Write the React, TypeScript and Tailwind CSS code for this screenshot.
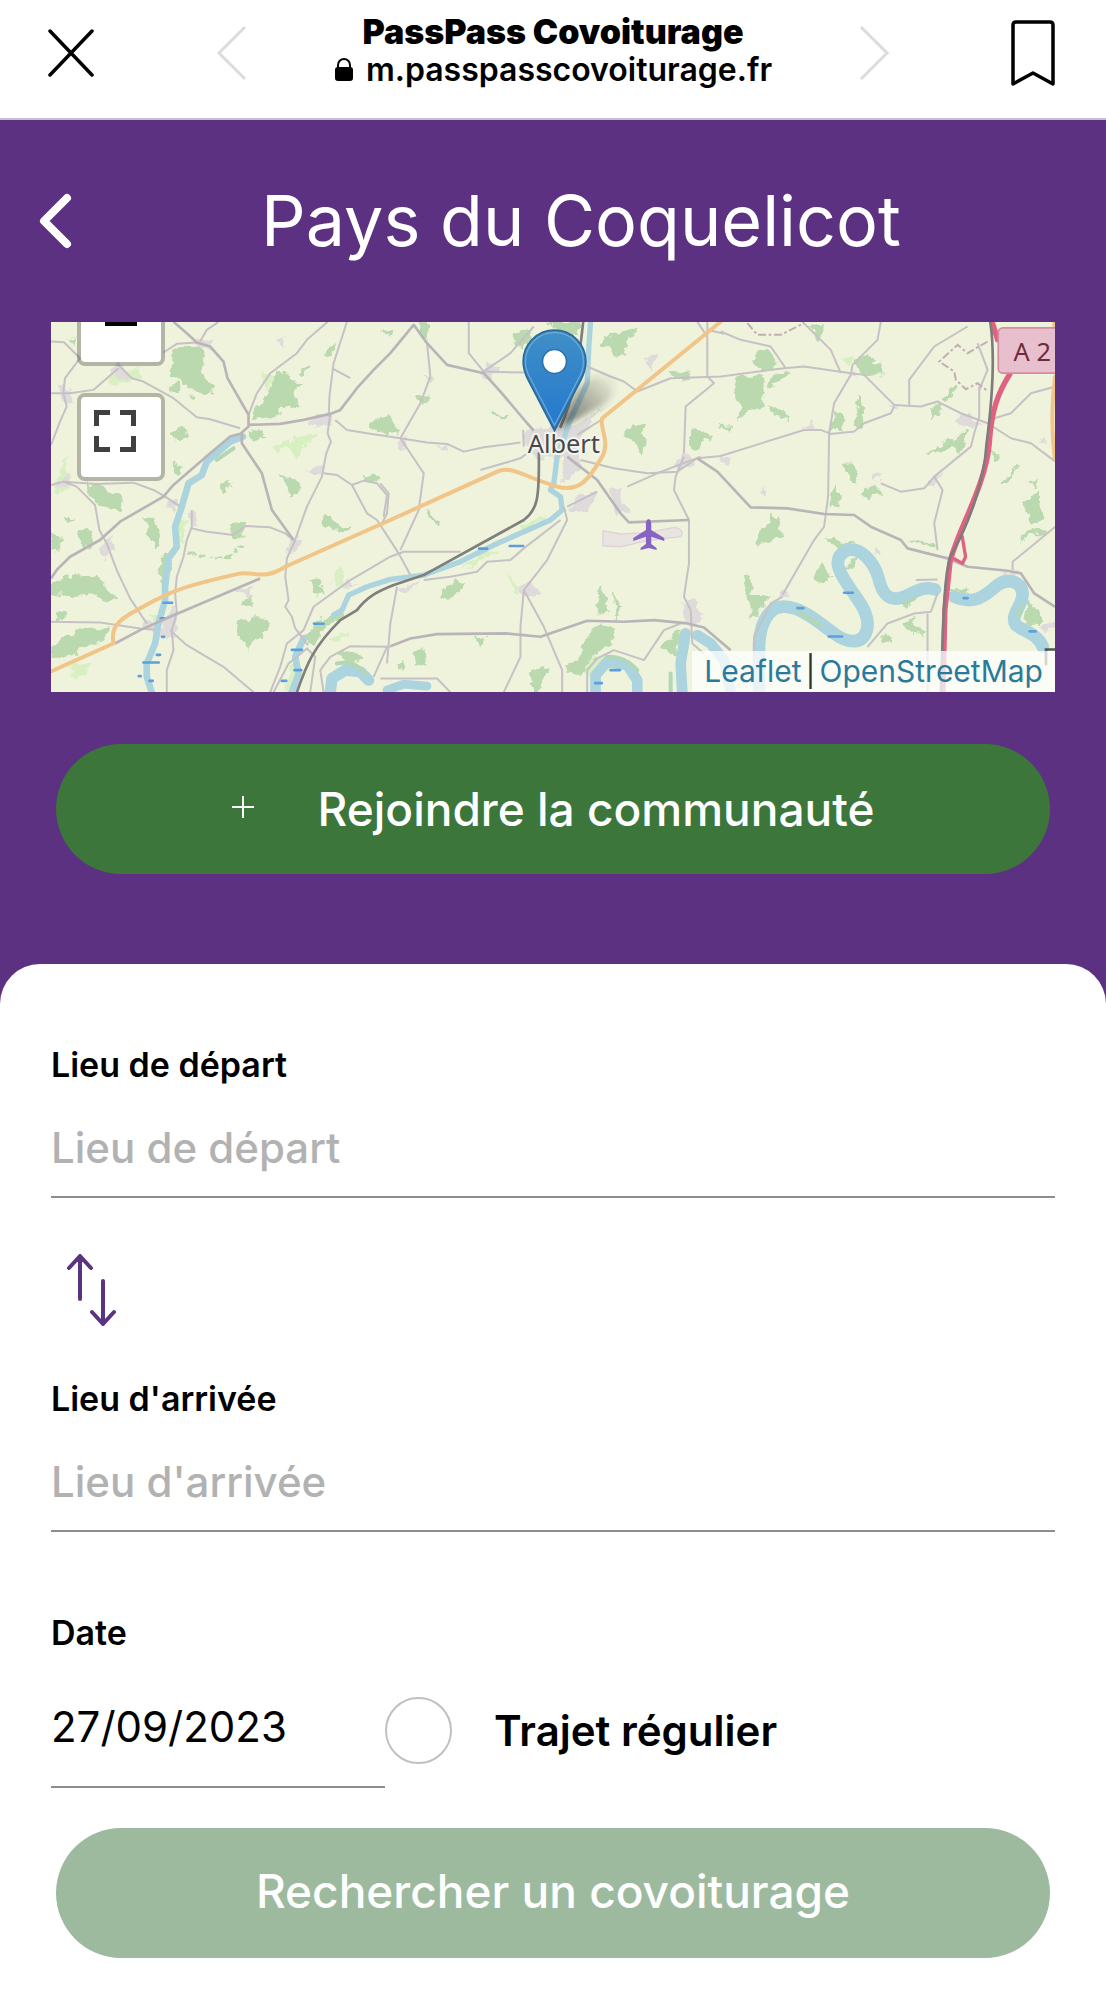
import React from "react";

const WEST_ROADS = [
  "M33 95L72 97L120 145L75 205L70 250L80 290L60 335L33 405",
  "M33 250H90L160 240L235 175",
  "M235 165L275 205L310 215L400 265L470 322L510 328L600 355",
  "M470 98L410 102L370 128M480 95L500 60L535 36",
  "M625 315L650 250L690 190L770 130L800 90L862 36",
  "M865 320L868 255L880 160L920 36M880 178L930 205",
  "M870 312L862 370L872 395L858 430L845 500L800 590L775 660L765 690L740 745L735 800L745 870L735 890L755 920L765 955L803 1005",
  "M885 330L920 360L980 370L1080 385L1160 398L1220 402L1270 425L1330 412L1440 398",
  "M33 525L70 515L110 530L165 585L178 660L200 700L230 780L270 865L320 940",
  "M70 515L170 522L280 518L340 540L375 560L420 590",
  "M455 600V650L440 690L430 740L410 800L405 850L410 910L395 960L400 1020L380 1080V1146",
  "M455 655L500 665L580 675L615 648L690 652L735 670L760 690",
  "M33 935L180 937L300 955L345 958M390 960L440 1005L550 1070L640 1146",
  "M850 490L890 495L935 525L980 610L1010 630L1075 730L1110 795",
  "M935 525L970 512L1010 520L1040 555L1030 620",
  "M1260 725H1090L1050 740L930 810L820 890L790 960L740 1000L720 1070L690 1146",
  "M700 1146L745 1060L800 1015L825 1040L810 1146M850 1146L840 1080L870 1040L930 1008L1050 1010",
  "M1000 1100L1040 1010",
];

const WEST_MAIN = [
  "M400 36L440 70L470 98L510 110L550 155L562 205L605 280L625 315V350L605 368V400L665 490L695 600L760 690",
  "M605 370L570 380L510 430L400 525L370 560L240 635L180 690L90 740L50 780L33 805",
  "M625 345L720 342L790 330L870 312L900 300L950 235L1000 180L1050 130L1120 45L1160 100L1220 165L1330 190L1380 245L1460 340L1480 362",
  "M225 1000L300 960L390 920L660 805",
  "M1050 1008L1110 985L1190 972L1400 970L1500 980L1640 932L1750 935L1840 930L1940 940L1990 952L2070 1020",
];

const MID_ROADS = [
  "M265 36V130L310 185L430 188M310 185L390 130L460 50",
  "M140 100L150 200L120 280L60 385L130 490L115 600L60 720M0 520L25 550L20 610L0 650",
  "M620 170L690 200L730 215L770 245L870 205L1020 200L1210 175L1270 170L1410 190",
  "M980 36V200L1000 220L915 290L910 430M950 36L980 80M980 60L1030 72",
  "M600 450L700 475L800 490L890 485L950 445L1020 438L1270 360L1320 360L1350 372L1420 365L1450 340L1530 310L1540 290",
  "M740 530L830 490L960 440",
  "M910 440L885 500L880 540L925 630V760L910 860L930 900L935 1000L970 1030",
  "M550 590L560 630L500 750L430 840L420 950V1040L370 1146",
  "M430 840L490 950L545 1080V1146",
  "M560 590L650 545M300 480L420 445L440 430M430 410L428 360M590 375L670 325",
  "M130 810L210 800L290 785L320 755L390 750L430 715L540 630",
  "M50 830L30 940L20 1060M0 1105H170L210 1146",
  "M640 1050L700 1020L790 1050L850 960L900 940M620 1146V1080L650 1045",
];

const EAST_ROADS = [
  "M0 65L60 90L150 110L195 175M245 36L330 120L360 190",
  "M480 36L470 90L395 165L390 195L340 280L325 370L322 560L310 650L280 690L185 855",
  "M390 190L430 195L520 285L600 290L650 275L720 310L800 340L870 385L930 400L1003 455",
  "M565 285V210L640 110L740 50M820 325L870 310L930 250L1003 230",
  "M775 230V320L760 370L750 410L640 500L665 540L640 640L650 720",
  "M640 500L610 535L540 545L480 520M770 100L800 180L775 240",
  "M875 780V755L1003 650M440 1010L500 940L580 910L630 905L650 850",
  "M620 910V1146M585 810L650 808M100 1050V980L150 880L185 860",
];

const WEST_WOODS = [
  "M410 112L480 110L490 150L480 185L520 230L510 255L440 230L420 212L395 200L392 150Z",
  "M705 185L750 190L745 215L782 220L760 250L775 290L720 285L710 320L640 328L640 300L665 285L690 230Z",
  "M140 515L175 530L205 545L245 565L240 598L180 585L145 550Z",
  "M300 620L340 625L360 680L350 712L335 690L330 645Z",
  "M36 820L90 800L170 795L190 830L215 850L230 865L180 870L170 850L70 858L36 850Z",
  "M36 1010L100 970L150 955L205 950L190 990L140 1010L90 1035L36 1035Z",
  "M590 935L650 920L690 945L660 980L640 985L625 1022L605 985L590 975Z",
  "M395 365L420 350L438 370L420 392L395 388Z",
  "M725 500L770 515L775 550L750 550Z",
  "M120 660L145 655L155 690L140 712L120 695Z",
  "M36 660L60 690L62 715L36 720Z",
  "M545 530L565 510L570 530L550 548Z",
  "M570 645L612 640L610 680L575 680Z",
  "M845 615L870 620L880 640L925 660L915 668L850 640Z",
  "M970 490L1010 495L1015 515L975 515Z",
  "M1000 330L1045 320L1040 365L985 358Z",
  "M620 365L660 360L680 378L640 390Z",
  "M780 185L810 165L812 178L785 192Z",
  "M850 135L880 108L878 130Z",
  "M810 810L830 805L850 855L820 850ZM600 865L635 860L635 885L605 885Z",
  "M790 985L830 940L900 905L910 920L860 950L815 1005Z",
  "M370 740L390 735L395 760L380 800L382 835L368 830L362 800Z",
  "M390 235L410 220L415 245ZM445 260L465 258L460 268ZM75 625L103 626L80 634Z",
  "M50 910L75 905L75 925L52 925ZM400 455L425 470L415 490L400 480Z",
  "M890 1030L930 1020L965 1050L920 1060ZM85 90L105 85L105 110Z",
];

const MID_WOODS = [
  "M505 36H600L590 75L540 70Z",
  "M660 100L700 75L765 55L740 90L735 135L700 135L690 110L665 110Z",
  "M405 80L440 60L445 90L425 118L405 105Z",
  "M110 36H145L140 85L125 80Z",
  "M0 320L30 325L55 370L30 360L20 375L0 355Z",
  "M730 375L760 345L795 350L780 370L790 390L785 440L768 405L765 385Z",
  "M935 350L995 380L960 400L950 420L928 410Z",
  "M180 850L220 815L248 825L240 840L205 870Z",
  "M640 890L660 830L680 880L685 910L650 908ZM698 850L720 890L710 925Z",
  "M550 1070L590 1050L620 980L660 945L710 960L690 1000L650 1015L600 1100Z",
  "M450 1080L480 1070L505 1080L480 1110L478 1146H460Z",
  "M865 190L925 180L930 210L905 222Z",
  "M50 1060L70 1055L75 1080L55 1082ZM100 1030L125 1015L130 1070L110 1068Z",
  "M280 985L315 985L305 1005ZM140 595L175 640L165 640Z",
  "M855 1000L895 960L890 1050L850 1010Z",
  "M110 260L145 262L125 280ZM10 60L35 62L30 78ZM340 312L385 320L345 320Z",
];

const EAST_WOODS = [
  "M50 200L125 200L130 290L75 300L60 330V270L40 250Z",
  "M110 130L150 125L165 165L125 180L105 160Z",
  "M145 235L160 195L205 180L195 205L165 220Z",
  "M400 150L440 135L480 160L480 195L430 195Z",
  "M270 45L300 40L312 75L290 85Z",
  "M340 310L365 310L365 358L330 358Z",
  "M400 350L415 255L432 320L430 350L410 362Z",
  "M370 460L395 460L412 515L395 515Z",
  "M330 560L345 525L360 590L328 582Z",
  "M430 535L470 535L485 555L455 555L450 568L430 560Z",
  "M632 290L660 280L655 310L635 322ZM672 275L705 225L712 232L680 280Z",
  "M615 435L660 405L700 395L735 365L730 410L715 425L705 408L660 420Z",
  "M115 660L145 645L150 620L175 625L170 655L190 680L150 685L112 710Z",
  "M70 800L85 790L95 855L150 860L130 885L95 925L85 890Z",
  "M280 780L310 765L330 800L315 820L285 810Z",
  "M545 945L575 920L580 945L612 970L570 965Z",
  "M910 580L950 550L955 590L970 630L930 635Z",
  "M895 690L930 660L970 660L965 678L930 672ZM560 700L645 700L640 710Z",
  "M918 870L955 910V945L915 945ZM690 835L740 840L735 855Z",
  "M375 790L395 745L420 740L390 775ZM545 880L575 865L570 890Z",
  "M840 520L860 505L885 470L862 520ZM310 680L350 695L400 700L370 715L330 705Z",
  "M140 295L185 310L200 325L165 315ZM930 515L950 510L948 530Z",
  "M815 420L830 445L815 448ZM0 350L30 348L20 360ZM480 985L515 975L510 992Z",
];

const WEST_TOWNS = [
  "M210 175L240 160L275 195L240 212Z",
  "M470 90L520 95L510 118L470 105Z",
  "M800 345L830 312L870 315L865 348Z",
  "M180 710L210 680L220 720L195 745Z",
  "M50 520L85 490L90 520L60 532Z",
  "M795 480L845 470L845 495Z",
  "M50 225L75 215L100 290L70 275Z",
  "M305 920L330 935L360 955L400 880L412 950L400 985L350 975L315 960Z",
  "M370 590L400 570L415 590L400 602ZM440 620L465 600L465 655Z",
  "M585 840L635 830L625 860ZM910 830L930 805L945 825Z",
  "M755 685L785 690L770 720L735 725ZM700 95L735 85L730 110Z",
];

const MID_TOWNS = [
  "M425 370L470 350H590L680 280L640 320L590 400L600 470L560 515H545V430L470 450L430 400Z",
  "M560 600L600 560L655 540L640 580L600 615Z",
  "M680 530L720 535L720 570L750 600L715 610Z",
  "M55 390L75 385L80 420L60 425ZM175 405L205 400L200 425Z",
  "M300 185L320 160L360 175L330 210ZM130 190L165 205L145 215Z",
  "M880 460L910 430L940 440L950 460L890 480Z",
  "M905 880L940 870L965 930L930 950L915 935Z",
  "M415 840L445 815L480 850L445 865Z",
  "M795 145L840 125L820 160L810 185ZM50 840L110 815L80 850Z",
];

const EAST_TOWNS = [
  "M0 435L35 440L20 460L0 455ZM245 350L275 335L280 360Z",
  "M705 320L740 310L780 340L750 360L715 345Z",
  "M455 500L485 482L470 520ZM610 530L640 490L665 490L635 540Z",
  "M500 285L540 280L530 305ZM110 545L135 535L125 560Z",
  "M170 860L195 835L205 865ZM830 795L900 785L870 810L835 815Z",
  "M960 950L1003 930V955L970 970ZM950 400L975 370L970 395Z",
  "M380 190L400 180L410 205ZM460 710L480 730L460 735Z",
];

const PALE_WOODS = [
  "M36 545L75 450L85 430L75 480L105 520L50 555Z",
  "M200 195L290 175L300 205L220 225Z",
  "M700 410L780 380L840 370L800 400L770 450L750 410L710 430Z",
  "M415 620L440 640L430 700L412 690Z",
  "M80 1070L150 1060L140 1090L110 1105Z",
  "M660 190L700 195L680 240Z",
  "M1260 780L1320 735L1380 715L1320 755Z",
  "M1440 650L1520 610L1510 635L1450 665Z",
  "M1400 780L1435 830L1432 855L1415 830Z",
  "M840 850L900 770L915 830L890 835L880 800Z",
  "M330 915L360 915L370 940L345 945Z",
  "M860 985L930 965L900 1000ZM790 1010L750 1146H730L755 1060Z",
  "M2400 155L2440 135L2430 170ZM1620 1060L1700 1030L1740 1060L1650 1110Z",
];

function Paths({ list }: { list: string[] }) {
  return (
    <>
      {list.map((d, i) => (
        <path key={i} d={d} />
      ))}
    </>
  );
}

function MapDrawing() {
  return (
    <svg
      className="block h-full w-full"
      viewBox="33 36 3009 1110"
      preserveAspectRatio="xMidYMid slice"
      role="img"
      aria-label="Carte autour d'Albert"
    >
      <defs>
        <linearGradient id="pin" x1="0" y1="0" x2="0" y2="1">
          <stop offset="0" stopColor="#3f8fc6" />
          <stop offset="1" stopColor="#2478cf" />
        </linearGradient>
        <linearGradient id="pinShadow" x1="0" y1="1" x2="1" y2="0">
          <stop offset="0" stopColor="#333" stopOpacity="0.75" />
          <stop offset="1" stopColor="#333" stopOpacity="0" />
        </linearGradient>
        <filter id="soft" x="-20%" y="-20%" width="140%" height="140%">
          <feGaussianBlur stdDeviation="9" />
        </filter>
        <filter id="organic" x="-2%" y="-2%" width="104%" height="104%">
          <feTurbulence type="fractalNoise" baseFrequency="0.035" numOctaves="3" seed="4" result="noise" />
          <feDisplacementMap in="SourceGraphic" in2="noise" scale="34" xChannelSelector="R" yChannelSelector="G" />
          <feGaussianBlur stdDeviation="2" />
        </filter>
      </defs>
      <rect x="33" y="36" width="3009" height="1110" fill="#eff3dc" />

      <g filter="url(#organic)">
        <g fill="#d8efc2">
          <Paths list={PALE_WOODS} />
        </g>
        <g fill="#bbd9af" stroke="#bbd9af" strokeWidth="4" strokeLinejoin="round">
          <Paths list={WEST_WOODS} />
          <g transform="translate(1020 0)">
            <Paths list={MID_WOODS} />
          </g>
          <g transform="translate(2040 0)">
            <Paths list={EAST_WOODS} />
          </g>
          <path d="M450 728L500 742L570 740L605 705" fill="none" strokeWidth="9" strokeDasharray="18 9" />
        </g>
        <g fill="#dfdbda">
          <Paths list={WEST_TOWNS} />
          <g transform="translate(1020 0)">
            <Paths list={MID_TOWNS} />
          </g>
          <g transform="translate(2040 0)">
            <Paths list={EAST_TOWNS} />
          </g>
        </g>
      </g>

      <g fill="none" stroke="#acd4de" strokeLinecap="round" strokeLinejoin="round">
        <path strokeWidth="20" d="M608 380L570 395L500 455L485 495L445 520L425 590L405 650L410 710L385 745L375 830L375 870L355 940L345 1000L320 1060V1100L335 1146" />
        <path strokeWidth="16" d="M1650 36L1645 110L1640 220L1590 330L1550 440L1540 520L1530 540L1560 560L1565 600L1530 630L1450 665L1360 705L1260 755L1150 795L1050 808L980 830L925 855L905 900L880 915" />
        <path strokeWidth="20" d="M790 985L765 1040L775 1090L755 1146" />
        <path strokeWidth="34" d="M870 1146L875 1105L915 1080L960 1085L985 1110" />
        <path strokeWidth="26" d="M1040 1140L1090 1122L1160 1128" />
        <path strokeWidth="32" d="M1665 1146V1095L1700 1055L1760 1065L1790 1110V1146M1925 1146L1920 1060L1935 970M1970 975L2010 1000L2050 1050L2070 1146" />
      </g>
      <g transform="translate(2040 0)" fill="none" stroke="#acd4de" strokeWidth="38" strokeLinecap="round" strokeLinejoin="round">
        <path d="M115 1146V1000C120 930 150 885 195 890C250 895 290 935 340 970C380 1000 425 1005 438 960C450 910 410 870 385 830C350 780 335 745 375 722C420 705 460 760 472 800C485 860 510 880 560 855C600 835 620 830 642 838M700 860C760 885 790 860 830 825C860 805 900 810 905 850C905 890 865 915 885 945C910 965 950 970 965 1010" />
      </g>
      <g fill="none" stroke="#b2d6b6" strokeWidth="12" strokeLinecap="round">
        <path d="M890 1060Q940 1050 975 1090M1700 1040Q1750 1035 1790 1080M2270 900Q2300 925 2340 945M580 415L530 450M1890 1090V1146" />
        <path d="M2590 880L2620 865M2940 890L2935 915" />
      </g>
      <g stroke="#5b9fdf" strokeWidth="8" strokeLinecap="round">
        <path d="M370 878H396M362 925H374M366 980H372M350 1034H360M310 1057H356M296 1098H302M328 1112H338M822 941H850M755 1019H785M763 1080H783M724 1112H738M1316 716H1340M1408 708H1448M1710 1080H1738M1664 1119H1684" />
        <path d="M2270 894H2288M2410 848H2436M2364 979H2404M2768 864H2780M2966 964H2984" />
      </g>

      <g fill="none" stroke="#c6c1c5" strokeWidth="6" strokeLinejoin="round">
        <Paths list={WEST_ROADS} />
        <g transform="translate(1020 0)">
          <Paths list={MID_ROADS} />
        </g>
        <g transform="translate(2040 0)">
          <Paths list={EAST_ROADS} />
        </g>
      </g>
      <g fill="none" stroke="#b9b4b8" strokeWidth="8" strokeLinejoin="round">
        <Paths list={WEST_MAIN} />
        <path d="M1580 440L1670 510L1740 610L1765 637L1945 630" />
        <path d="M1970 445L2030 485L2130 592L2240 595L2350 612L2440 615L2490 650L2580 690L2600 715L2720 745L2780 770L2900 782L2940 790L2980 850L3042 890" />
      </g>

      <path d="M1687 662L1740 672L1820 668L1900 652Q1935 658 1920 680L1820 692L1740 710L1687 708Z" fill="#e9e4e2" stroke="#dfd4d3" strokeWidth="4" />
      <g fill="none" stroke="#c4adb6" strokeWidth="6" strokeDasharray="24 8 8 8">
        <path d="M2120 40L2150 75L2220 75L2290 40M2840 95L2780 130L2750 105L2695 155L2740 185L2745 210L2775 238L2810 220L2842 245" />
      </g>

      <g fill="none" strokeLinecap="round" strokeLinejoin="round">
        <path stroke="#f1c488" strokeWidth="12" d="M33 1084L220 1000C214 960 222 935 290 900C380 850 400 835 600 790C640 784 670 812 735 770L1050 630L1370 485C1410 465 1450 500 1550 530C1620 550 1650 500 1685 440C1710 395 1675 350 1685 325L2040 36" />
        <path stroke="#f1c488" strokeWidth="12" d="M3040 36V100M3042 200Q3026 330 3042 450" />
        <path stroke="#7f7f7d" strokeWidth="8" d="M770 1146C800 1060 820 1010 900 930L950 900C980 860 1010 845 1060 825L1150 795L1450 630C1490 600 1497 570 1495 430M1628 36C1610 200 1600 260 1560 350" />
        <path stroke="#df6281" strokeWidth="16" d="M2855 40L2870 90M2908 190C2870 250 2852 300 2845 400C2835 530 2740 680 2727 760L2712 900L2706 1146" />
        <path stroke="#df6281" strokeWidth="10" d="M2764 680L2774 740L2765 760L2738 745" />
        <path stroke="#807b7c" strokeWidth="8" d="M2848 36C2865 150 2850 300 2837 400C2830 520 2780 650 2728 740C2710 800 2708 900 2700 1146" />
      </g>

      <rect x="2872" y="54" width="240" height="136" rx="14" fill="#e8bfcc" stroke="#d58ba2" strokeWidth="5" />
      <text x="2918" y="153" fontSize="76" fill="#6b2a3f" fontFamily="'Noto Sans', sans-serif">A 2</text>
      <path d="M3015 1065V1018H3042" fill="none" stroke="#555" strokeWidth="8" />

      <path
        transform="translate(1778 628)"
        fill="#8763c4"
        d="M46 0C52 0 54 8 54 15V32L93 56V65L54 52V74L70 86V92L46 86L22 92V86L38 74V52L0 65V56L38 32V15C38 8 40 0 46 0Z"
      />

      <path
        filter="url(#soft)"
        fill="url(#pinShadow)"
        d="M1545 362L1600 250Q1650 180 1710 205Q1740 240 1690 285Z"
      />
      <path
        d="M1542 362L1464 212C1453 192 1448 175 1448 155A94 94 0 0 1 1636 155C1636 175 1631 192 1620 212Z"
        fill="url(#pin)"
        stroke="#2d6a94"
        strokeWidth="5"
      />
      <path
        d="M1542 346L1471 208C1460 190 1455 172 1455 155A87 87 0 0 1 1629 155C1629 172 1624 190 1613 208Z"
        fill="none"
        stroke="#69a8d8"
        strokeWidth="4"
      />
      <circle cx="1542" cy="155" r="36" fill="#fff" stroke="#2c72ab" strokeWidth="5" />
      <text
        x="1570"
        y="430"
        textAnchor="middle"
        fontSize="76"
        fill="#48484a"
        stroke="#f4f4ee"
        strokeWidth="12"
        strokeLinejoin="round"
        paintOrder="stroke"
        fontFamily="'Noto Sans', sans-serif"
      >
        Albert
      </text>
    </svg>
  );
}

function BrowserBar() {
  return (
    <header className="flex h-[120px] items-center justify-between border-b-2 border-[#c9bcd6] bg-white px-12 pb-3">
      <div className="flex items-center gap-30">
        <button type="button" aria-label="Fermer">
          <svg className="block h-12 w-12" viewBox="0 0 48 48" fill="none" stroke="#000" strokeWidth="3.5" strokeLinecap="round">
            <path d="M2 2L44 46M44 2L2 46" />
          </svg>
        </button>
        <button type="button" aria-label="Page précédente">
          <svg className="block h-14 w-8" viewBox="0 0 32 56" fill="none" stroke="#dcdcdc" strokeWidth="3">
            <path d="M29 2L3 28L29 54" />
          </svg>
        </button>
      </div>
      <div className="pb-1 text-center text-black">
        <p className="text-[34px] leading-[38px] font-black">PassPass Covoiturage</p>
        <p className="flex items-center justify-center gap-3 text-[32px] leading-[38px] font-semibold">
          <svg className="h-6 w-5" viewBox="0 0 20 24">
            <rect x="1" y="9" width="18" height="14" rx="3" />
            <path d="M4 11V7a6 6 0 0 1 12 0v4" fill="none" stroke="#000" strokeWidth="2" />
          </svg>
          m.passpasscovoiturage.fr
        </p>
      </div>
      <div className="flex items-center gap-30">
        <button type="button" aria-label="Page suivante">
          <svg className="block h-14 w-8" viewBox="0 0 32 56" fill="none" stroke="#dcdcdc" strokeWidth="3">
            <path d="M3 2L29 28L3 54" />
          </svg>
        </button>
        <button type="button" aria-label="Ajouter aux favoris">
          <svg className="block h-[68px] w-12" viewBox="0 0 48 68" fill="none" stroke="#000" strokeWidth="3.5" strokeLinejoin="round">
            <path d="M6 3H40Q43 3 43 6V65L23 54L3 65V6Q3 3 6 3Z" />
          </svg>
        </button>
      </div>
    </header>
  );
}

function PlaceField({ id, label }: { id: string; label: string }) {
  return (
    <div className="flex flex-col">
      <label htmlFor={id} className="text-[34px] leading-[42px] font-semibold">
        {label}
      </label>
      <input
        id={id}
        type="text"
        placeholder={label}
        className="h-28 w-full border-b-2 border-[#8f8b92] bg-transparent pt-3 text-[42px] font-medium outline-none placeholder:text-[#b2b2b2]"
      />
    </div>
  );
}

export default function App() {
  return (
    <div className="min-h-screen bg-[#5c3182] font-['Inter','Liberation_Sans',sans-serif] text-black">
      <BrowserBar />

      <section className="px-[51px] pt-[52px] pb-[90px]">
        <div className="flex h-[98px] items-center">
          <button type="button" aria-label="Retour" className="-ml-4">
            <svg className="block h-14 w-10" viewBox="0 0 40 56" fill="none" stroke="#fff" strokeWidth="8" strokeLinecap="round" strokeLinejoin="round">
              <path d="M32 5L9 28L32 51" />
            </svg>
          </button>
          <h1 className="flex-1 pl-8 text-center text-[70px] leading-[98px] font-normal text-white">
            Pays du Coquelicot
          </h1>
        </div>

        <div className="relative mt-[52px] h-[370px] overflow-hidden">
          <MapDrawing />
          <div className="absolute top-0 left-[26px] flex flex-col gap-[27px]">
            <button
              type="button"
              aria-label="Dézoomer"
              className="flex h-11 w-[88px] justify-center rounded-b-lg border-4 border-t-0 border-black/25 bg-white bg-clip-padding"
            >
              <span className="h-1 w-8 bg-black" />
            </button>
            <button
              type="button"
              aria-label="Plein écran"
              className="flex h-[88px] w-[88px] items-center justify-center rounded-lg border-4 border-black/25 bg-white bg-clip-padding pr-3 pb-3"
            >
              <svg className="h-[42px] w-[42px]" viewBox="0 0 42 42" fill="none" stroke="#404040" strokeWidth="5">
                <path d="M2.5 16V2.500H16M26 2.500H39.500V16M39.500 26V39.500H26M16 39.500H2.500V26" />
              </svg>
            </button>
          </div>
          <div className="absolute right-0 bottom-0 flex h-[41px] items-center gap-1 bg-white/75 px-3 text-[30px] text-[#2a7b9b]">
            <a href="#leaflet">Leaflet</a>
            <span className="text-[#333]">|</span>
            <a href="#openstreetmap">OpenStreetMap</a>
          </div>
        </div>

        <div className="px-[5px] pt-[52px]">
          <button
            type="button"
            className="flex h-[130px] w-full items-center justify-center gap-16 rounded-full bg-[#3c763b] text-[46px] font-medium text-white"
          >
            <svg className="mb-1 h-[22px] w-[22px]" viewBox="0 0 22 22" stroke="#fff" strokeWidth="2">
              <path d="M11 0V22M0 11H22" />
            </svg>
            Rejoindre la communauté
          </button>
        </div>
      </section>

      <form className="flex flex-col rounded-t-[40px] bg-white px-[51px] pt-20 pb-[43px]">
        <PlaceField id="depart" label="Lieu de départ" />
        <button type="button" aria-label="Inverser départ et arrivée" className="mt-[54px] ml-4 self-start">
          <svg className="block h-[76px] w-[50px]" viewBox="0 0 50 76" fill="none" stroke="#5a3480" strokeWidth="4" strokeLinecap="round" strokeLinejoin="round">
            <path d="M13 47V4M2 16L13 4L24 16M36 29V72M25 60L36 72L47 60" />
          </svg>
        </button>
        <div className="mt-[50px]">
          <PlaceField id="arrivee" label="Lieu d'arrivée" />
        </div>
        <div className="mt-20 flex items-end">
          <div className="flex w-[334px] flex-col">
            <label htmlFor="date" className="text-[34px] leading-[42px] font-semibold">
              Date
            </label>
            <input
              id="date"
              type="text"
              defaultValue="27/09/2023"
              className="h-[134px] w-full border-b-2 border-[#8f8b92] bg-transparent pt-3 text-[42px] outline-none"
            />
          </div>
          <input
            id="regulier"
            type="checkbox"
            className="mb-6 h-[67px] w-[67px] appearance-none rounded-full border-2 border-[#c0c0c0] bg-white checked:bg-[#5c3182]"
          />
          <label htmlFor="regulier" className="mb-6 ml-[42px] text-[42px] leading-[67px] font-semibold">
            Trajet régulier
          </label>
        </div>
        <div className="px-[5px] pt-10">
          <button
            type="submit"
            className="h-[130px] w-full rounded-full bg-[#9dba9f] pb-1 text-[46px] font-medium text-white"
          >
            Rechercher un covoiturage
          </button>
        </div>
      </form>
    </div>
  );
}
